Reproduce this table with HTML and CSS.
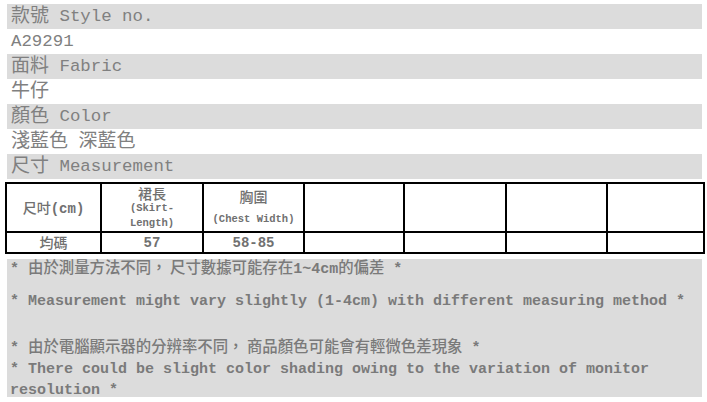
FILE: index.html
```html
<!DOCTYPE html>
<html lang="zh-Hant">
<head>
<meta charset="utf-8">
<title>A29291</title>
<link rel="stylesheet" href="styles.css">
</head>
<body>
<div class="page">
  <div class="band gray"><span class="zh">款號</span> Style no.</div>
  <div class="band">A29291</div>
  <div class="band gray"><span class="zh">面料</span> Fabric</div>
  <div class="band"><span class="zh">牛仔</span></div>
  <div class="band gray"><span class="zh">顏色</span> Color</div>
  <div class="band"><span class="zh">淺藍色</span> <span class="zh">深藍色</span></div>
  <div class="band gray"><span class="zh">尺寸</span> Measurement</div>

  <table class="size">
    <colgroup>
      <col class="w1"><col class="w2"><col class="w3"><col class="w4"><col class="w5"><col class="w6"><col class="w7">
    </colgroup>
    <tr class="r1">
      <td><span class="tzh">尺吋</span><span class="ten">(cm)</span></td>
      <td><div class="tzh">裙長</div><div class="tsm">(Skirt-<br>Length)</div></td>
      <td><div class="tzh">胸圍</div><div class="tsm gap">(Chest Width)</div></td>
      <td></td><td></td><td></td><td></td>
    </tr>
    <tr class="r2">
      <td><span class="tzh">均碼</span></td>
      <td><span class="ten">57</span></td>
      <td><span class="ten">58-85</span></td>
      <td></td><td></td><td></td><td></td>
    </tr>
  </table>

  <div class="notes">
    <p class="n1">* <span class="nzh">由於測量方法不同， 尺寸數據可能存在</span>1~4cm<span class="nzh">的偏差</span> *</p>
    <p class="n2">* Measurement might vary slightly (1-4cm) with different measuring method *</p>
    <p class="n3">* <span class="nzh">由於電腦顯示器的分辨率不同， 商品顏色可能會有輕微色差現象</span> *</p>
    <p class="n4">* There could be slight color shading owing to the variation of monitor resolution *</p>
  </div>
</div>
</body>
</html>
```

FILE: styles.css
```css
html, body {
  margin: 0;
  padding: 0;
  background: #ffffff;
}

.page {
  padding-top: 4px;
  font-family: "Liberation Mono", "Noto Sans CJK TC", monospace;
  color: #808080;
}

.band {
  margin-left: 7px;
  width: 695px;
  height: 25px;
  line-height: 25px;
  padding-left: 4px;
  box-sizing: border-box;
  font-size: 17.4px;
  white-space: nowrap;
}

.band.gray {
  background: #dcdcdc;
}

.zh {
  font-family: "Noto Sans CJK TC", sans-serif;
  font-size: 19px;
  line-height: 1;
  vertical-align: -1px;
}

.size {
  margin: 3px 0 0 5px;
  width: 698px;
  border-collapse: collapse;
  table-layout: fixed;
}

.w1 { width: 95px; }
.w2 { width: 102px; }
.w3 { width: 101px; }
.w4 { width: 100px; }
.w5 { width: 102px; }
.w6 { width: 101px; }
.w7 { width: 97px; }

.size td {
  border: 2px solid #000000;
  padding: 0;
  text-align: center;
  vertical-align: middle;
  color: #707070;
  line-height: 16px;
}

.r1 td {
  height: 47px;
}

.r2 td {
  height: 19px;
}

.tzh {
  font-family: "Noto Sans CJK TC", sans-serif;
  font-size: 14px;
  line-height: 16px;
  font-weight: 500;
}

.ten {
  font-family: "Liberation Mono", monospace;
  font-size: 14px;
  font-weight: bold;
  line-height: 16px;
}

.tsm {
  font-family: "Liberation Mono", monospace;
  font-size: 10.5px;
  font-weight: bold;
  line-height: 15px;
}

.tsm.gap {
  margin-top: 8px;
}

.notes {
  margin: 5px 0 0 7px;
  width: 695px;
  height: 138px;
  padding-left: 3px;
  box-sizing: border-box;
  background: #dcdcdc;
  font-size: 15px;
  font-weight: bold;
  color: #7a7a7a;
}

.notes p {
  margin: 0;
  line-height: 21px;
}

.nzh {
  font-family: "Noto Sans CJK TC", sans-serif;
  font-size: 15.4px;
  font-weight: 500;
  line-height: 1;
}

.n2 {
  margin-top: 11px !important;
}

.n3 {
  margin-top: 26px !important;
}
```
